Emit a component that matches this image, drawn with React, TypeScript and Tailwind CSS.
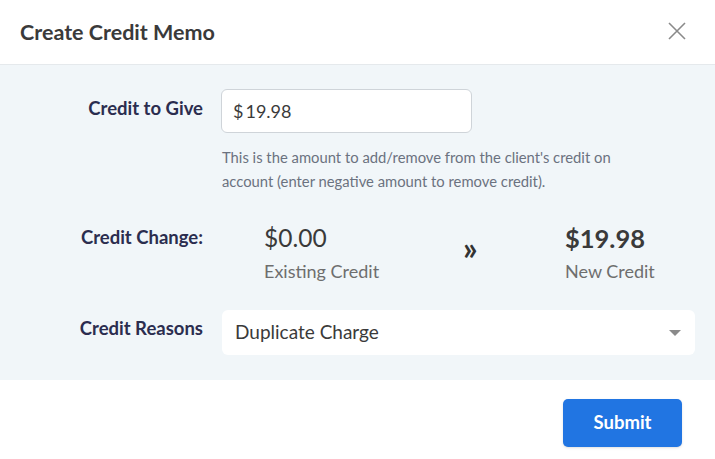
export default function App() {
  return (
    <div className="h-[459px] w-[715px] bg-white font-['Lato',sans-serif] text-[#333]">
      <div className="flex h-[65px] items-center justify-between border-b border-[#e5e9ec] pl-5 pr-[29px]">
        <h2 className="text-[21.5px] font-bold text-[#3a3a3a]">Create Credit Memo</h2>
        <svg width="18" height="18" viewBox="0 0 18 18" className="mt-[-2px]">
          <path d="M1 1l16 16M17 1L1 17" stroke="#8a8a8a" strokeWidth="1.6" />
        </svg>
      </div>

      <div className="flex h-[315px] flex-col bg-[#f1f6f9] pt-6 pr-5">
        <div className="flex">
          <label className="w-[203px] pt-[5px] text-right text-[18.5px] font-bold leading-[28px] text-[#2b2d4f]">Credit to Give</label>
          <div className="ml-[18px]">
            <div className="flex h-[44px] w-[251px] items-center rounded-md border border-[#cfd4d9] bg-white px-[11px] text-[18px] text-[#3a3a3a]">
              <span className="mr-[2px]">$</span>19.98
            </div>
            <p className="mt-[12px] w-[405px] pl-px text-[14.8px] leading-[24px] text-[#6b7280]">
              This is the amount to add/remove from the client's credit on account (enter negative amount to remove credit).
            </p>
          </div>
        </div>

        <div className="mt-[30px] flex">
          <label className="w-[203px] text-right text-[18.5px] font-bold leading-[28px] text-[#2b2d4f]">Credit Change:</label>
          <div className="ml-[61px] flex">
            <div className="w-[199px]">
              <div className="text-[24.5px] leading-[30px] text-[#3a3a3a]">$0.00</div>
              <div className="mt-[6px] text-[18px] leading-[24px] text-[#6e6e6e]">Existing Credit</div>
            </div>
            <div className="w-[102px] pt-[9px] text-[32px] font-bold leading-none text-[#333]">»</div>
            <div>
              <div className="text-[25.5px] font-bold leading-[30px] text-[#3a3a3a]">$19.98</div>
              <div className="mt-[6px] text-[18px] leading-[24px] text-[#6e6e6e]">New Credit</div>
            </div>
          </div>
        </div>

        <div className="mt-[27px] flex">
          <label className="w-[203px] pt-[4px] text-right text-[18.5px] font-bold leading-[28px] text-[#2b2d4f]">Credit Reasons</label>
          <div className="ml-[19px] flex h-[45px] flex-1 items-center justify-between rounded-md bg-white pl-[13px] pr-[14px] text-[19px] text-[#3a3a3a]">
            <span>Duplicate Charge</span>
            <svg width="12" height="6" viewBox="0 0 12 6">
              <path d="M0 0h12L6 6z" fill="#8a8a8a" />
            </svg>
          </div>
        </div>
      </div>

      <div className="flex justify-end pt-[19px] pr-[33px]">
        <button className="h-[48px] w-[119px] rounded-[5px] bg-[#2175e2] text-[18.5px] font-bold text-white shadow-sm">Submit</button>
      </div>
    </div>
  );
}
